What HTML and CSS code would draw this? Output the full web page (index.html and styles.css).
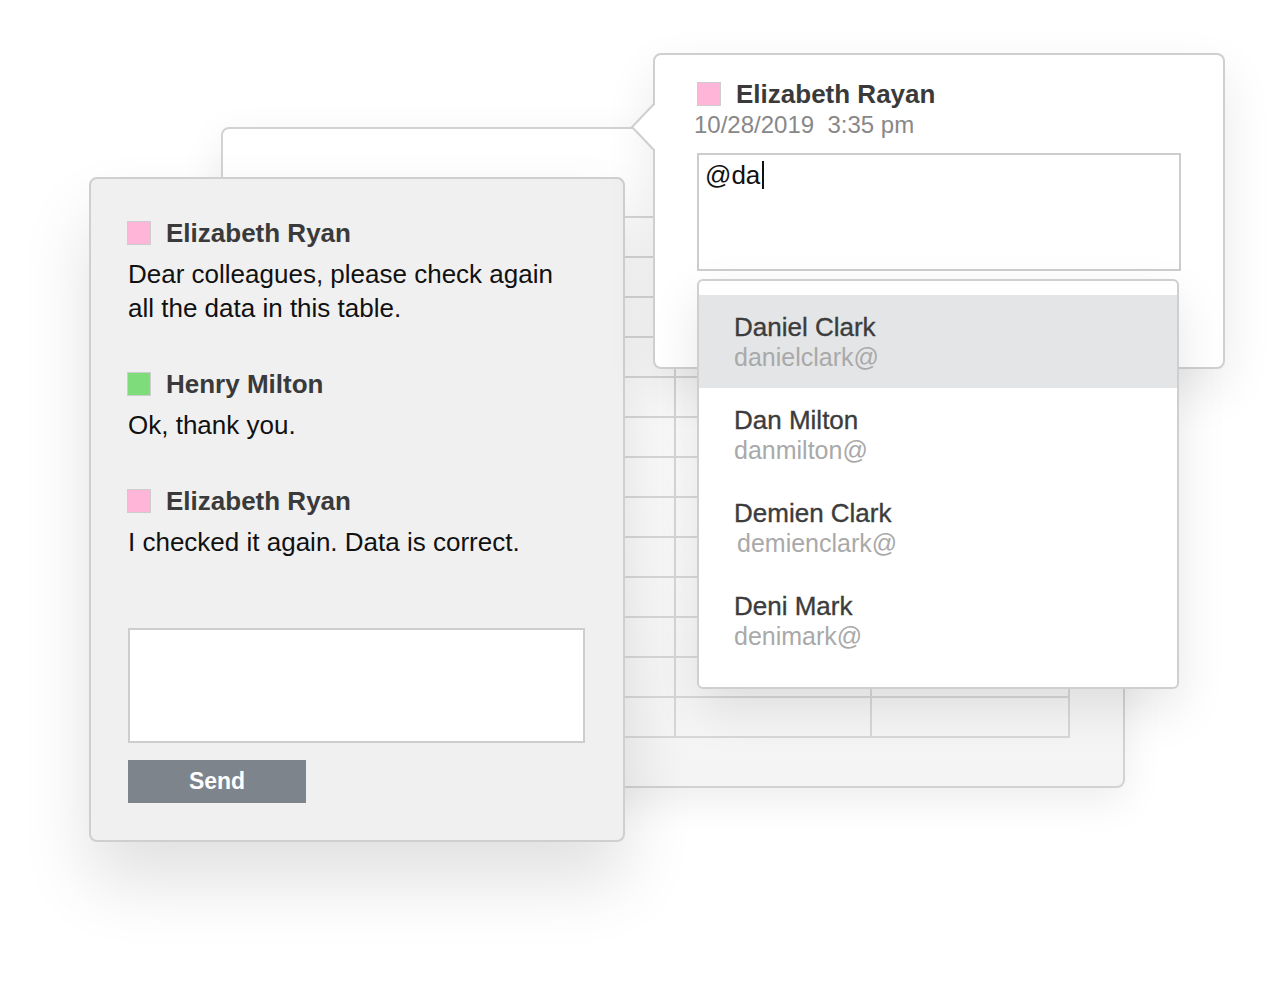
FILE: index.html
```html
<!DOCTYPE html>
<html lang="en">
<head>
<meta charset="utf-8">
<title>Comments</title>
<link rel="stylesheet" href="styles.css">
</head>
<body>
<div class="stage">
  <div class="sheet">
    <div class="grid"></div>
  </div>

  <div class="panel">
    <div class="comment">
      <div class="author"><span class="swatch pink"></span>Elizabeth Ryan</div>
      <p class="text">Dear colleagues, please check again all the data in this table.</p>
    </div>
    <div class="comment">
      <div class="author"><span class="swatch green"></span>Henry Milton</div>
      <p class="text">Ok, thank you.</p>
    </div>
    <div class="comment comment-last">
      <div class="author"><span class="swatch pink"></span>Elizabeth Ryan</div>
      <p class="text">I checked it again. Data is correct.</p>
    </div>
    <div class="reply-box"></div>
    <button class="send">Send</button>
  </div>

  <div class="popup">
    <svg class="tail" width="26" height="44" viewBox="0 0 26 44">
      <polygon points="23,0 1,22 23,44 26,44 26,0" fill="#fff"/>
      <polyline points="23,-1 1,22 23,45" fill="none" stroke="#cfcfcf" stroke-width="2"/>
    </svg>
    <div class="author popup-author"><span class="swatch pink"></span>Elizabeth Rayan</div>
    <div class="date">10/28/2019&nbsp; 3:35 pm</div>
    <div class="input">@da<span class="caret"></span></div>

    <ul class="mentions">
      <li class="mention active"><span class="m-name">Daniel Clark</span><span class="m-mail">danielclark@</span></li>
      <li class="mention"><span class="m-name">Dan Milton</span><span class="m-mail">danmilton@</span></li>
      <li class="mention"><span class="m-name">Demien Clark</span><span class="m-mail shift">demienclark@</span></li>
      <li class="mention"><span class="m-name">Deni Mark</span><span class="m-mail">denimark@</span></li>
    </ul>
  </div>
</div>
</body>
</html>
```

FILE: styles.css
```css
* { box-sizing: border-box; }

html, body {
  margin: 0;
  padding: 0;
  background: #ffffff;
  font-family: "Liberation Sans", Arial, sans-serif;
}

.stage {
  position: relative;
  width: 1280px;
  height: 1000px;
  overflow: hidden;
  background: #ffffff;
}

/* background spreadsheet */
.sheet {
  position: absolute;
  left: 221px;
  top: 127px;
  width: 904px;
  height: 661px;
  border: 2px solid #d2d2d2;
  border-radius: 8px;
  background: linear-gradient(to bottom, #ffffff 0%, #fafafa 60%, #f4f4f4 100%);
  box-shadow: 0 12px 40px rgba(0, 0, 0, 0.08);
  padding-top: 87px;
  z-index: 1;
}

.grid {
  margin-left: 58px;
  width: 789px;
  height: 522px;
  background-image:
    linear-gradient(#d8d8d8, #d8d8d8),
    linear-gradient(#d8d8d8, #d8d8d8),
    linear-gradient(#d8d8d8, #d8d8d8),
    linear-gradient(#d8d8d8, #d8d8d8),
    linear-gradient(#d8d8d8, #d8d8d8),
    repeating-linear-gradient(to bottom, #d8d8d8 0 2px, transparent 2px 40px);
  background-size: 2px 100%, 2px 100%, 2px 100%, 2px 100%, 2px 100%, 100% 100%;
  background-position: 0 0, 197px 0, 393px 0, 589px 0, 787px 0, 0 0;
  background-repeat: no-repeat;
}

/* left comment panel */
.panel {
  position: absolute;
  left: 89px;
  top: 177px;
  width: 536px;
  height: 665px;
  border: 2px solid #cfcfcf;
  border-radius: 8px;
  background: #f0f0f0;
  padding: 37px 38px 37px 36px;
  box-shadow: 0 40px 70px rgba(0, 0, 0, 0.12);
  z-index: 2;
}

.comment { margin-bottom: 42px; }
.comment.comment-last { margin-bottom: 69px; }

.author {
  display: flex;
  align-items: center;
  font-size: 26px;
  font-weight: bold;
  line-height: 34px;
  color: #3a3a3a;
}

.swatch {
  width: 24px;
  height: 24px;
  flex: none;
  margin-right: 15px;
  border: 1px solid #cdcdcd;
}
.swatch.pink { background: #ffb5d8; }
.swatch.green { background: #7fdc7b; }

.text {
  margin: 7px 0 0 1px;
  font-size: 26px;
  line-height: 34px;
  color: #111111;
}

.reply-box {
  margin-left: 1px;
  width: 457px;
  height: 115px;
  border: 2px solid #cdcdcd;
  background: #ffffff;
}

.send {
  display: block;
  margin: 17px 0 0 1px;
  width: 178px;
  height: 43px;
  border: none;
  background: #7d848b;
  color: #ffffff;
  font-family: "Liberation Sans", Arial, sans-serif;
  font-size: 23px;
  font-weight: bold;
  padding: 0;
}

/* popup with mentions */
.popup {
  position: absolute;
  left: 653px;
  top: 53px;
  width: 572px;
  height: 316px;
  border: 2px solid #cfcfcf;
  border-radius: 8px;
  background: #ffffff;
  padding: 24px 42px;
  box-shadow: 0 20px 50px rgba(0, 0, 0, 0.09);
  z-index: 3;
}

.tail {
  position: absolute;
  left: -24px;
  top: 50px;
  overflow: visible;
}

.popup-author { line-height: 30px; }

.date {
  margin-left: -3px;
  margin-top: 3px;
  font-size: 24px;
  line-height: 26px;
  color: #888888;
}

.input {
  margin-top: 15px;
  height: 118px;
  border: 2px solid #cdcdcd;
  padding: 5px 6px;
  font-size: 26px;
  line-height: 30px;
  color: #111111;
  display: flex;
  align-items: flex-start;
}

.caret {
  display: inline-block;
  width: 2px;
  height: 28px;
  margin: 1px 0 0 2px;
  background: #111111;
}

.mentions {
  position: absolute;
  left: 42px;
  top: 224px;
  width: 482px;
  height: 410px;
  margin: 0;
  padding: 14px 0 0;
  list-style: none;
  border: 2px solid #cfcfcf;
  border-radius: 6px;
  background: #ffffff;
  box-shadow: 0 20px 50px rgba(0, 0, 0, 0.1);
}

.mention {
  display: flex;
  flex-direction: column;
  height: 93px;
  padding: 17px 35px 16px;
}

.mention.active { background: #e4e5e7; }

.m-name {
  font-size: 26px;
  line-height: 30px;
  color: #3c3c3c;
  -webkit-text-stroke: 0.35px #3c3c3c;
}

.m-mail {
  font-size: 25px;
  line-height: 30px;
  color: #a9a9a9;
}

.m-mail.shift { padding-left: 3px; }
```
